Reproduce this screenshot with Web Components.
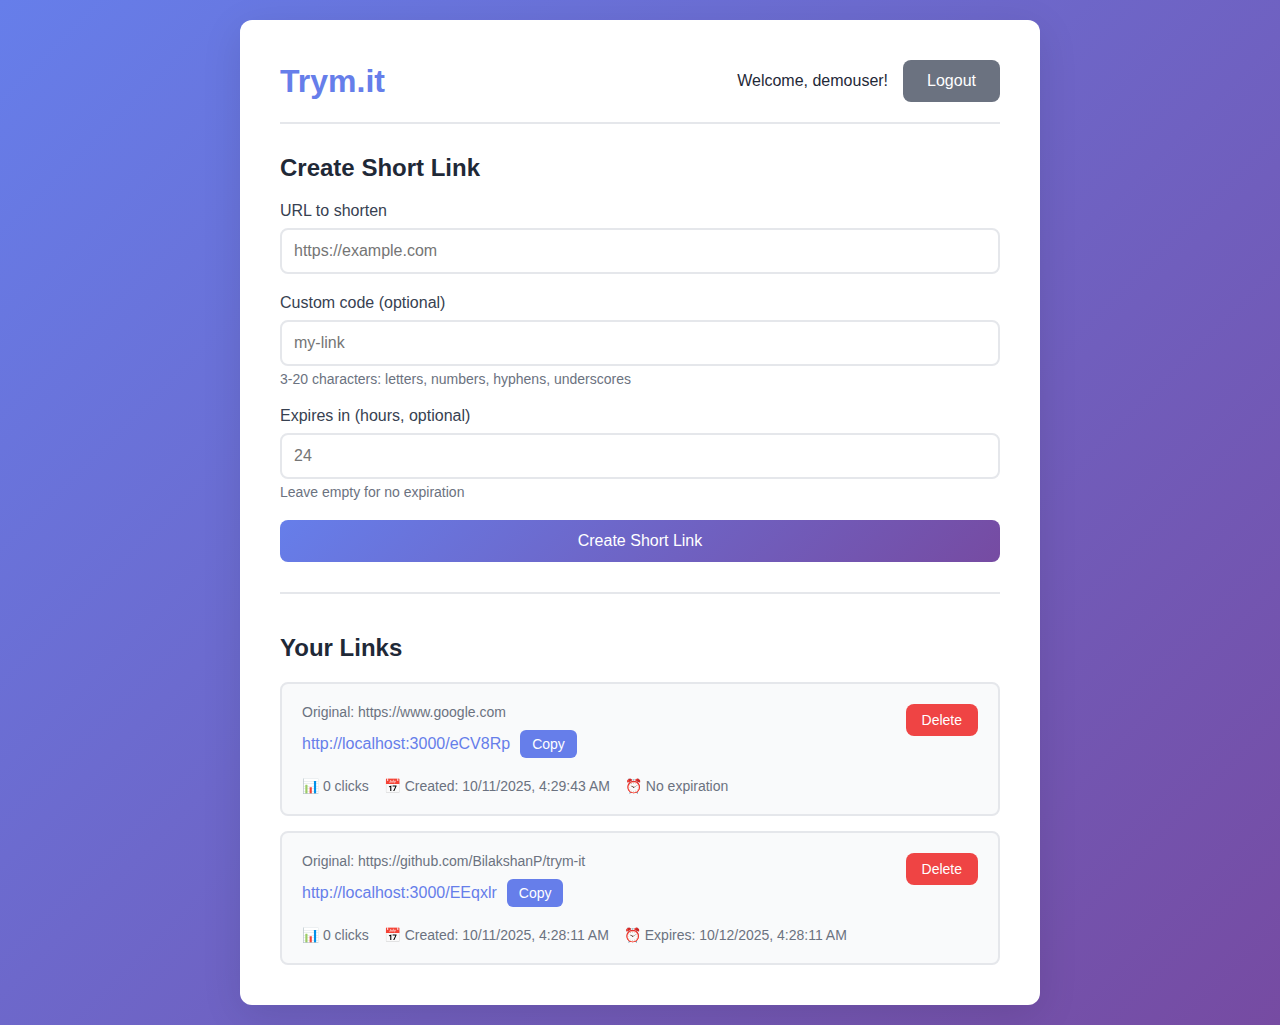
<!DOCTYPE html>
<html lang="en">
<head>
<meta charset="utf-8">
<meta name="viewport" content="width=device-width, initial-scale=1">
<title>Trym.it</title>
<style>
  * { box-sizing: border-box; }
  body {
    margin: 0;
    padding: 20px;
    min-height: 100vh;
    font-family: "Liberation Sans", Arial, sans-serif;
    font-size: 16px;
    color: #1f2937;
    background: linear-gradient(135deg, #667eea 0%, #764ba2 100%);
  }
</style>
</head>
<body>
<trym-app></trym-app>

<script>
const base = `
  *, *::before, *::after { box-sizing: border-box; }
  h1, h2, p { margin: 0; }
`;

class TrymElement extends HTMLElement {
  render(css, html) {
    if (!this.shadowRoot) this.attachShadow({ mode: "open" });
    this.shadowRoot.innerHTML = `<style>${base}${css}</style>${html}`;
  }
}

class TrymButton extends TrymElement {
  connectedCallback() {
    this.render(`
      :host { display: block; }
      button {
        display: block;
        width: 100%;
        padding: 12px 24px;
        border: 0;
        border-radius: 8px;
        font: inherit;
        line-height: 18px;
        color: #fff;
        background: linear-gradient(135deg, #667eea 0%, #764ba2 100%);
        cursor: pointer;
      }
      :host([variant="secondary"]) button { background: #6b7280; }
      :host([variant="copy"]) button {
        padding: 6px 12px;
        border-radius: 6px;
        font-size: 14px;
        line-height: 16px;
        background: #667eea;
      }
      :host([variant="danger"]) button {
        padding: 8px 16px;
        font-size: 14px;
        line-height: 16px;
        background: #ef4444;
      }
    `, `<button type="button"><slot></slot></button>`);
  }
}
customElements.define("trym-button", TrymButton);

class TrymField extends TrymElement {
  connectedCallback() {
    const get = (name) => this.getAttribute(name) || "";
    this.render(`
      :host { display: block; }
      label {
        display: block;
        margin-bottom: 8px;
        line-height: 18px;
        color: #374151;
      }
      input {
        display: block;
        width: 100%;
        padding: 12px;
        border: 2px solid #e5e7eb;
        border-radius: 8px;
        font: inherit;
        line-height: 18px;
        background: #fff;
        appearance: textfield;
      }
      input:focus { outline: none; border-color: #667eea; }
      small {
        display: block;
        margin-top: 5px;
        font-size: 14px;
        line-height: 16px;
        color: #6b7280;
      }
    `, `
      <label for="control">${get("label")}</label>
      <input id="control" type="${get("type") || "text"}" placeholder="${get("placeholder")}">
      ${get("hint") ? `<small>${get("hint")}</small>` : ""}
    `);
  }
}
customElements.define("trym-field", TrymField);

class TrymHeader extends TrymElement {
  connectedCallback() {
    this.render(`
      :host {
        display: flex;
        justify-content: space-between;
        align-items: center;
        padding-bottom: 20px;
        border-bottom: 2px solid #e5e7eb;
      }
      h1 { font-size: 32px; line-height: 36px; color: #667eea; }
      .user { display: flex; align-items: center; gap: 15px; }
    `, `
      <h1>Trym.it</h1>
      <div class="user">
        <span>Welcome, <slot></slot>!</span>
        <trym-button variant="secondary">Logout</trym-button>
      </div>
    `);
  }
}
customElements.define("trym-header", TrymHeader);

class TrymCreateForm extends TrymElement {
  connectedCallback() {
    this.render(`
      :host { display: block; }
      h2 { margin-bottom: 20px; font-size: 24px; line-height: 28px; }
      form { display: flex; flex-direction: column; gap: 20px; }
    `, `
      <h2>Create Short Link</h2>
      <form>
        <trym-field label="URL to shorten" type="url" placeholder="https://example.com"></trym-field>
        <trym-field label="Custom code (optional)" placeholder="my-link"
          hint="3-20 characters: letters, numbers, hyphens, underscores"></trym-field>
        <trym-field label="Expires in (hours, optional)" type="number" placeholder="24"
          hint="Leave empty for no expiration"></trym-field>
        <trym-button>Create Short Link</trym-button>
      </form>
    `);
  }
}
customElements.define("trym-create-form", TrymCreateForm);

class TrymLink extends TrymElement {
  connectedCallback() {
    const get = (name) => this.getAttribute(name) || "";
    this.render(`
      :host {
        display: flex;
        justify-content: space-between;
        align-items: flex-start;
        gap: 20px;
        padding: 20px;
        border: 2px solid #e5e7eb;
        border-radius: 8px;
        background: #f9fafb;
        font-size: 14px;
        line-height: 16px;
        color: #6b7280;
      }
      .info { flex: 1; min-width: 0; }
      .original { margin-bottom: 10px; overflow-wrap: anywhere; }
      .short { display: flex; align-items: center; gap: 10px; margin-bottom: 20px; }
      a { font-size: 16px; line-height: 18px; color: #667eea; text-decoration: none; }
      .stats { display: flex; flex-wrap: wrap; gap: 15px; }
    `, `
      <div class="info">
        <p class="original">Original: ${get("original")}</p>
        <div class="short">
          <a href="${get("short")}">${get("short")}</a>
          <trym-button variant="copy">Copy</trym-button>
        </div>
        <div class="stats">
          <span>📊 ${get("clicks")} clicks</span>
          <span>📅 Created: ${get("created")}</span>
          <span>⏰ ${get("expires") ? `Expires: ${get("expires")}` : "No expiration"}</span>
        </div>
      </div>
      <trym-button variant="danger">Delete</trym-button>
    `);
  }
}
customElements.define("trym-link", TrymLink);

class TrymLinkList extends TrymElement {
  connectedCallback() {
    this.render(`
      :host { display: block; padding-top: 40px; border-top: 2px solid #e5e7eb; }
      h2 { margin-bottom: 20px; font-size: 24px; line-height: 28px; }
      .list { display: flex; flex-direction: column; gap: 15px; }
    `, `
      <h2>Your Links</h2>
      <div class="list"><slot></slot></div>
    `);
  }
}
customElements.define("trym-link-list", TrymLinkList);

class TrymApp extends TrymElement {
  connectedCallback() {
    this.render(`
      :host { display: block; }
      main {
        display: flex;
        flex-direction: column;
        gap: 30px;
        max-width: 800px;
        margin: 0 auto;
        padding: 40px;
        border-radius: 12px;
        background: #fff;
        box-shadow: 0 10px 40px rgba(0, 0, 0, 0.1);
      }
    `, `
      <main>
        <trym-header>demouser</trym-header>
        <trym-create-form></trym-create-form>
        <trym-link-list>
          <trym-link original="https://www.google.com" short="http://localhost:3000/eCV8Rp"
            clicks="0" created="10/11/2025, 4:29:43 AM"></trym-link>
          <trym-link original="https://github.com/BilakshanP/trym-it" short="http://localhost:3000/EEqxlr"
            clicks="0" created="10/11/2025, 4:28:11 AM" expires="10/12/2025, 4:28:11 AM"></trym-link>
        </trym-link-list>
      </main>
    `);
  }
}
customElements.define("trym-app", TrymApp);
</script>
</body>
</html>
